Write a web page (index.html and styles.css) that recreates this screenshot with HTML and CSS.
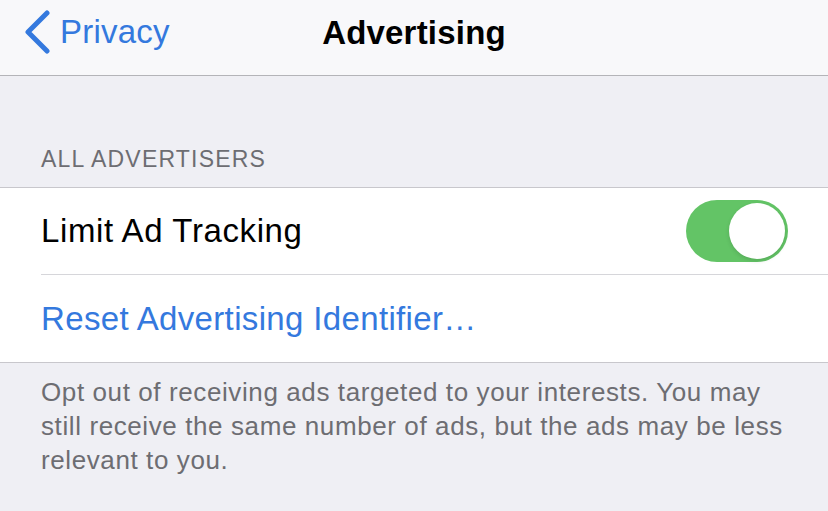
FILE: index.html
```html
<!DOCTYPE html>
<html lang="en">
<head>
  <meta charset="UTF-8" />
  <title>Advertising</title>
  <link rel="stylesheet" href="styles.css">
</head>
<body>

  <header class="navbar">
    <a class="back-link" href="#">
      <svg class="chevron" width="28" height="44" viewBox="0 0 28 44">
        <polyline points="23,3 4,22 23,41" />
      </svg>
      <span>Privacy</span>
    </a>
    <h1 class="nav-title">Advertising</h1>
    <div></div>
  </header>

  <div class="section-title">ALL ADVERTISERS</div>

  <ul class="group">
    <li class="row">
      <span class="row-label">Limit Ad Tracking</span>
      <label class="switch">
        <input type="checkbox" checked />
        <span class="knob"></span>
      </label>
    </li>
    <li class="row">
      <a class="row-action" href="#">Reset Advertising Identifier&hellip;</a>
    </li>
  </ul>

  <p class="section-footer">
    Opt out of receiving ads targeted to your interests. You may
    still receive the same number of ads, but the ads may be less
    relevant to you.
  </p>

</body>
</html>
```

FILE: styles.css
```css
body {
  margin: 0;
  font-family: "Liberation Sans", Arial, sans-serif;
  background: #efeff4;
  color: #000;
}

/* top navigation bar */
.navbar {
  display: grid;
  grid-template-columns: 1fr auto 1fr;
  align-items: center;
  height: 63px;
  padding-bottom: 12px;
  background: #f8f8fa;
  border-bottom: 1px solid #b4b4b8;
}
.back-link {
  display: flex;
  align-items: center;
  gap: 8px;
  padding-left: 24px;
  color: #3479de;
  text-decoration: none;
  font-size: 33px;
  line-height: 1;
  letter-spacing: 0.2px;
}
.chevron {
  fill: none;
  stroke: #3479de;
  stroke-width: 5;
  stroke-linecap: round;
  stroke-linejoin: round;
}
.nav-title {
  margin: 0;
  font-size: 33px;
  font-weight: bold;
  line-height: 1;
  letter-spacing: 0.2px;
  padding-top: 2px;
}

/* section header */
.section-title {
  padding: 69px 41px 14px;
  font-size: 23px;
  line-height: 28px;
  letter-spacing: 1.2px;
  color: #6d6d72;
}

/* grouped list */
.group {
  list-style: none;
  margin: 0;
  padding: 0 0 0 41px;
  background: #fff;
  border-top: 1px solid #c8c7cc;
  border-bottom: 1px solid #c8c7cc;
}
.row {
  display: flex;
  justify-content: space-between;
  align-items: center;
  height: 86px;
  padding-right: 40px;
  font-size: 33px;
  letter-spacing: 0.6px;
}
.row + .row {
  height: 87px;
  border-top: 1px solid #d6d6da;
}
.row-action {
  color: #3479de;
  text-decoration: none;
  letter-spacing: 0.35px;
}

/* on/off switch */
.switch {
  position: relative;
  display: block;
  width: 102px;
  height: 62px;
}
.switch input {
  display: none;
}
.knob {
  display: block;
  width: 100%;
  height: 100%;
  border-radius: 31px;
  background: #e5e5ea;
}
.knob::after {
  content: "";
  position: absolute;
  top: 3px;
  left: 3px;
  width: 56px;
  height: 56px;
  border-radius: 50%;
  background: #fff;
  box-shadow: 0 2px 4px rgba(0,0,0,0.12);
}
.switch input:checked + .knob {
  background: #63c466;
}
.switch input:checked + .knob::after {
  left: 43px;
}

/* footer note */
.section-footer {
  margin: 0;
  padding: 12px 41px;
  font-size: 26px;
  line-height: 34px;
  letter-spacing: 0.6px;
  color: #6d6d72;
}
```
